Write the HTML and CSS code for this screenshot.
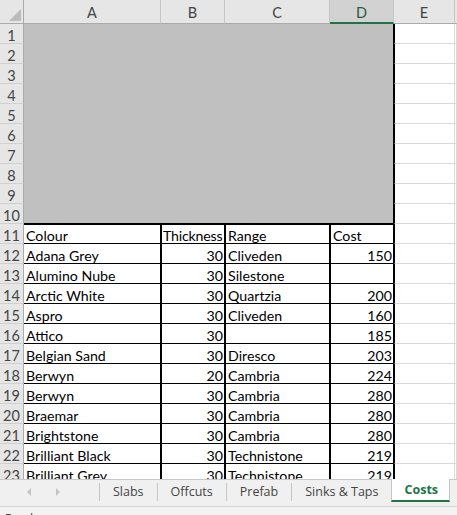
FILE: index.html
```html
<!DOCTYPE html>
<html>
<head>
<meta charset="utf-8">
<link rel="stylesheet" href="styles.css">
</head>
<body>
<div class="app">
  <div class="sheet">
    <div class="grid">
      <div class="corner"><svg width="24" height="24" viewBox="0 0 24 24"><polygon points="21,9 21,21 9,21" fill="#bcbcbc"/></svg></div>
      <div class="ch">A</div>
      <div class="ch">B</div>
      <div class="ch">C</div>
      <div class="ch sel">D</div>
      <div class="ch">E</div>
      <div class="ch last"></div>

      <div class="block"></div>

      <div class="rh">1</div><div class="c e"></div><div class="c"></div>
      <div class="rh">2</div><div class="c e"></div><div class="c"></div>
      <div class="rh">3</div><div class="c e"></div><div class="c"></div>
      <div class="rh">4</div><div class="c e"></div><div class="c"></div>
      <div class="rh">5</div><div class="c e"></div><div class="c"></div>
      <div class="rh">6</div><div class="c e"></div><div class="c"></div>
      <div class="rh">7</div><div class="c e"></div><div class="c"></div>
      <div class="rh">8</div><div class="c e"></div><div class="c"></div>
      <div class="rh">9</div><div class="c e"></div><div class="c"></div>
      <div class="rh">10</div><div class="c e"></div><div class="c"></div>

      <div class="rh">11</div>
      <div class="t top">Colour</div><div class="t top tl thick">Thickness</div><div class="t top tl">Range</div><div class="t top tl">Cost</div>
      <div class="c e"></div><div class="c"></div>

      <div class="rh">12</div>
      <div class="t">Adana Grey</div><div class="t tl n">30</div><div class="t tl">Cliveden</div><div class="t tl n">150</div>
      <div class="c e"></div><div class="c"></div>

      <div class="rh">13</div>
      <div class="t">Alumino Nube</div><div class="t tl n">30</div><div class="t tl">Silestone</div><div class="t tl n"></div>
      <div class="c e"></div><div class="c"></div>

      <div class="rh">14</div>
      <div class="t">Arctic White</div><div class="t tl n">30</div><div class="t tl">Quartzia</div><div class="t tl n">200</div>
      <div class="c e"></div><div class="c"></div>

      <div class="rh">15</div>
      <div class="t">Aspro</div><div class="t tl n">30</div><div class="t tl">Cliveden</div><div class="t tl n">160</div>
      <div class="c e"></div><div class="c"></div>

      <div class="rh">16</div>
      <div class="t">Attico</div><div class="t tl n">30</div><div class="t tl"></div><div class="t tl n">185</div>
      <div class="c e"></div><div class="c"></div>

      <div class="rh">17</div>
      <div class="t">Belgian Sand</div><div class="t tl n">30</div><div class="t tl">Diresco</div><div class="t tl n">203</div>
      <div class="c e"></div><div class="c"></div>

      <div class="rh">18</div>
      <div class="t">Berwyn</div><div class="t tl n">20</div><div class="t tl">Cambria</div><div class="t tl n">224</div>
      <div class="c e"></div><div class="c"></div>

      <div class="rh">19</div>
      <div class="t">Berwyn</div><div class="t tl n">30</div><div class="t tl">Cambria</div><div class="t tl n">280</div>
      <div class="c e"></div><div class="c"></div>

      <div class="rh">20</div>
      <div class="t">Braemar</div><div class="t tl n">30</div><div class="t tl">Cambria</div><div class="t tl n">280</div>
      <div class="c e"></div><div class="c"></div>

      <div class="rh">21</div>
      <div class="t">Brightstone</div><div class="t tl n">30</div><div class="t tl">Cambria</div><div class="t tl n">280</div>
      <div class="c e"></div><div class="c"></div>

      <div class="rh">22</div>
      <div class="t">Brilliant Black</div><div class="t tl n">30</div><div class="t tl">Technistone</div><div class="t tl n">219</div>
      <div class="c e"></div><div class="c"></div>

      <div class="rh">23</div>
      <div class="t">Brilliant Grey</div><div class="t tl n">30</div><div class="t tl">Technistone</div><div class="t tl n">219</div>
      <div class="c e"></div><div class="c"></div>
    </div>
  </div>

  <div class="tabbar">
    <div class="nav">
      <svg width="8" height="10" viewBox="0 0 8 10"><polygon points="6,1 6,9 2,5" fill="#c4c4c4"/></svg>
      <svg width="8" height="10" viewBox="0 0 8 10"><polygon points="2,1 2,9 6,5" fill="#c4c4c4"/></svg>
    </div>
    <div class="tab">Slabs</div>
    <div class="tab">Offcuts</div>
    <div class="tab">Prefab</div>
    <div class="tab">Sinks &amp; Taps</div>
    <div class="tab active">Costs</div>
  </div>
  <div class="status">Ready</div>
</div>
</body>
</html>
```

FILE: styles.css
```css
* { box-sizing: border-box; }

html, body {
  margin: 0;
  padding: 0;
  background: #ffffff;
}

.app {
  width: 457px;
  height: 515px;
  display: flex;
  flex-direction: column;
  overflow: hidden;
  font-family: Lato, "Liberation Sans", sans-serif;
}

.sheet {
  height: 479px;
  overflow: hidden;
  flex: none;
}

.grid {
  display: grid;
  grid-template-columns: 24px 137px 64px 105px 64px 61px 1fr;
  grid-template-rows: 24px repeat(23, 20px);
  width: 457px;
}

.corner {
  background: #e6e6e6;
  border-right: 1px solid #ababab;
  border-bottom: 1px solid #ababab;
}
.corner svg { display: block; }

.ch {
  background: #e6e6e6;
  border-right: 1px solid #c6c6c6;
  border-bottom: 1px solid #ababab;
  color: #444444;
  font-size: 14.5px;
  text-align: center;
  line-height: 23px;
  padding-top: 1px;
}
.ch.sel {
  background: #d2d2d2;
  border-bottom: 2px solid #217346;
  color: #2a5a3c;
}
.ch.last { border-right: none; }

.rh {
  background: #e6e6e6;
  border-right: 1px solid #ababab;
  border-bottom: 1px solid #d0d0d0;
  color: #444444;
  font-size: 14.5px;
  text-align: center;
  line-height: 19px;
  padding-top: 2px;
}

.block {
  grid-column: 2 / 6;
  grid-row: 2 / 12;
  background: #c0c0c0;
  border-right: 1px solid #000;
  border-bottom: 1px solid #000;
}

.c {
  border-right: 1px solid #d9d9d9;
  border-bottom: 1px solid #d9d9d9;
}
.c.e { border-left: 1px solid #000; }

.t {
  border-right: 1px solid #000;
  border-bottom: 1px solid #000;
  font-size: 14.2px;
  color: #000;
  line-height: 17px;
  padding: 3px 1px 0 2px;
  white-space: nowrap;
  overflow: hidden;
}
.t.top { border-top: 1px solid #000; padding-top: 2px; }
.t.tl { border-left: 1px solid #000; }
.t.thick { letter-spacing: -0.2px; padding-left: 1px; }
.t.n { text-align: right; padding-right: 1px; }

.tabbar {
  flex: none;
  height: 28px;
  background: #f0f0f0;
  border-top: 1px solid #c8c8c8;
  border-bottom: 1px solid #d4d4d4;
  display: flex;
  align-items: stretch;
  font-family: "Open Sans", "Noto Sans", sans-serif;
  font-size: 12.5px;
  color: #444;
  white-space: nowrap;
}

.nav {
  flex: none;
  width: 100px;
  display: flex;
  align-items: center;
  gap: 21px;
  padding-left: 25px;
  border-right: 1px solid #c6c6c6;
  margin: 3px 0 5px;
}
.nav svg { display: block; }

.tab {
  flex: none;
  display: flex;
  align-items: center;
  padding: 0 13px 2px;
  border-right: 1px solid #c6c6c6;
  margin: 3px 0 5px;
}

.tab.active {
  margin: -1px 0 4px -1px;
  background: #ffffff;
  border-left: 1px solid #c6c6c6;
  border-right: 1px solid #c6c6c6;
  border-bottom: 2px solid #217346;
  color: #217346;
  font-weight: 700;
  padding: 0 11px 0 12px;
}

.status {
  flex: 1;
  background: #f3f3f3;
  font-family: "Open Sans", "Noto Sans", sans-serif;
  font-size: 12px;
  color: #444;
  padding: 4px 0 0 5px;
  line-height: 16px;
}
```
